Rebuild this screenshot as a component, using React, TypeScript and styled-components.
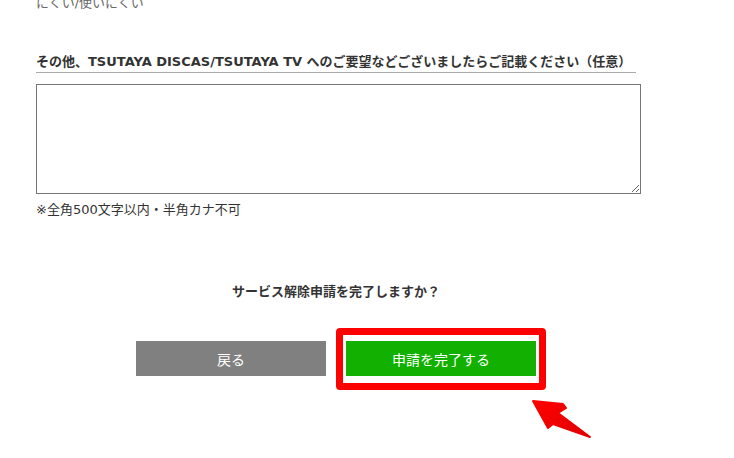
import React from 'react';
import styled, { createGlobalStyle } from 'styled-components';

const GlobalStyle = createGlobalStyle`
  html, body {
    margin: 0;
    padding: 0;
    background: #ffffff;
  }
  body {
    font-family: "DejaVu Sans", "Noto Sans CJK JP", sans-serif;
    color: #333333;
    overflow: hidden;
  }
`;

const Page = styled.div`
  position: relative;
  width: 734px;
  height: 458px;
  overflow: hidden;
`;

const Column = styled.div`
  width: 600px;
  padding-left: 36px;
  display: flex;
  flex-direction: column;
`;

const PrevAnswer = styled.p`
  margin: -5px 0 0;
  font-size: 13px;
  line-height: 16px;
  color: #666666;
`;

const FieldLabel = styled.h3`
  margin: 42px 0 0;
  padding-bottom: 1px;
  font-size: 13px;
  line-height: 18px;
  font-weight: bold;
  color: #333333;
  border-bottom: 1px solid #aaaaaa;
  white-space: nowrap;
`;

const CommentBox = styled.textarea`
  box-sizing: border-box;
  width: 605px;
  height: 110px;
  margin-top: 11px;
  border: 1px solid #767676;
  padding: 4px;
  font-family: inherit;
  font-size: 13px;
  resize: both;
  outline: none;
`;

const Note = styled.p`
  margin: 7px 0 0;
  font-size: 13px;
  line-height: 18px;
  color: #333333;
`;

const Question = styled.p`
  margin: 64px 0 0;
  font-size: 13px;
  line-height: 18px;
  font-weight: bold;
  text-align: center;
  color: #333333;
`;

const ButtonRow = styled.div`
  display: flex;
  justify-content: center;
  gap: 20px;
  margin-top: 40px;
`;

const ActionButton = styled.button<{ $primary?: boolean }>`
  position: relative;
  width: 190px;
  height: 35px;
  border: none;
  border-radius: 0;
  padding: 0;
  background: ${(p) => (p.$primary ? '#12b000' : '#808080')};
  color: #ffffff;
  font-family: inherit;
  font-size: 14px;
  cursor: pointer;
`;

const Highlight = styled.span`
  position: absolute;
  top: -13px;
  left: -10px;
  right: -10px;
  bottom: -14px;
  border: 7px solid #ff0000;
  border-radius: 4px;
  pointer-events: none;
`;

const PointerArrow = styled.svg`
  position: absolute;
  left: 526px;
  top: 394px;
  width: 70px;
  height: 50px;
  pointer-events: none;
`;

export default function App() {
  return (
    <Page>
      <GlobalStyle />
      <Column>
        <PrevAnswer>にくい/使いにくい</PrevAnswer>
        <FieldLabel>
          その他、TSUTAYA DISCAS/TSUTAYA TV へのご要望などございましたらご記載ください（任意）
        </FieldLabel>
        <CommentBox />
        <Note>※全角500文字以内・半角カナ不可</Note>
        <Question>サービス解除申請を完了しますか？</Question>
        <ButtonRow>
          <ActionButton>戻る</ActionButton>
          <ActionButton $primary>
            申請を完了する
            <Highlight />
          </ActionButton>
        </ButtonRow>
      </Column>
      <PointerArrow viewBox="526 394 70 50">
        <defs>
          <linearGradient id="arrowFill" x1="0" y1="0" x2="1" y2="1">
            <stop offset="0" stopColor="#ff0000" />
            <stop offset="1" stopColor="#e00000" />
          </linearGradient>
        </defs>
        <polygon
          points="533,401 563,404 566,408 558,413 590,437 553,424 548,428"
          fill="url(#arrowFill)"
          stroke="url(#arrowFill)"
          strokeWidth="2"
          strokeLinejoin="round"
        />
      </PointerArrow>
    </Page>
  );
}
